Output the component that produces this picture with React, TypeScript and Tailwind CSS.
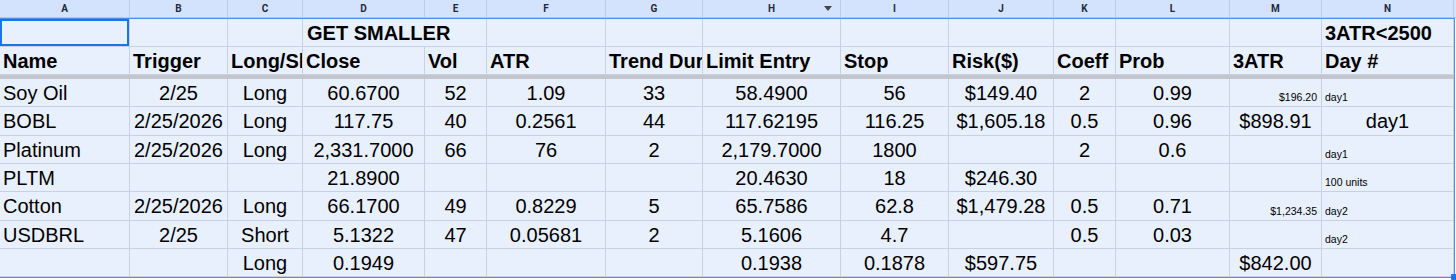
import React from "react"

type Cell =
  | string
  | { text: string; size: "small" | "big"; align: "left" | "right" | "center" }

const letters = ["A", "B", "C", "D", "E", "F", "G", "H", "I", "J", "K", "L", "M", "N"]

const headers = [
  "Name",
  "Trigger",
  "Long/Short",
  "Close",
  "Vol",
  "ATR",
  "Trend Duration",
  "Limit Entry",
  "Stop",
  "Risk($)",
  "Coeff",
  "Prob",
  "3ATR",
  "Day #",
]

const sm = (text: string, align: "left" | "right"): Cell => ({ text, size: "small", align })

const rows: { h: string; cells: Cell[] }[] = [
  {
    h: "h-[28px]",
    cells: ["Soy Oil", "2/25", "Long", "60.6700", "52", "1.09", "33", "58.4900", "56", "$149.40", "2", "0.99", sm("$196.20", "right"), sm("day1", "left")],
  },
  {
    h: "h-[29px]",
    cells: ["BOBL", "2/25/2026", "Long", "117.75", "40", "0.2561", "44", "117.62195", "116.25", "$1,605.18", "0.5", "0.96", "$898.91", "day1"],
  },
  {
    h: "h-[28px]",
    cells: ["Platinum", "2/25/2026", "Long", "2,331.7000", "66", "76", "2", "2,179.7000", "1800", "", "2", "0.6", "", sm("day1", "left")],
  },
  {
    h: "h-[28px]",
    cells: ["PLTM", "", "", "21.8900", "", "", "", "20.4630", "18", "$246.30", "", "", "", sm("100 units", "left")],
  },
  {
    h: "h-[29px]",
    cells: ["Cotton", "2/25/2026", "Long", "66.1700", "49", "0.8229", "5", "65.7586", "62.8", "$1,479.28", "0.5", "0.71", sm("$1,234.35", "right"), sm("day2", "left")],
  },
  {
    h: "h-[28px]",
    cells: ["USDBRL", "2/25", "Short", "5.1322", "47", "0.05681", "2", "5.1606", "4.7", "", "0.5", "0.03", "", sm("day2", "left")],
  },
  {
    h: "h-[28px]",
    cells: ["", "", "Long", "0.1949", "", "", "", "0.1938", "0.1878", "$597.75", "", "", "$842.00", ""],
  },
]

const gridCols =
  "grid grid-cols-[130px_98px_75px_122px_62px_119px_97px_138px_108px_105px_62px_114px_92px_132px]"

const cellBase =
  "border-r border-b border-[#c6d1e2] overflow-hidden whitespace-nowrap"

function DataCell({ cell, col, h }: { cell: Cell; col: number; h: string }) {
  if (typeof cell === "string") {
    const align = col === 0 ? "justify-start pl-[3px]" : "justify-center"
    return (
      <div className={`${cellBase} ${h} flex items-center ${align} text-[20px] leading-[20px]`}>
        {cell}
      </div>
    )
  }
  const align = cell.align === "right" ? "justify-end pr-[4px]" : "justify-start pl-[3px]"
  return (
    <div className={`${cellBase} ${h} flex items-end pb-[3px] ${align} text-[10.5px] leading-[12px]`}>
      {cell.text}
    </div>
  )
}

export default function App() {
  return (
    <div className="relative w-[1456px] h-[280px] bg-white font-['Liberation_Sans',Arial,sans-serif] text-black overflow-hidden">
      {/* column letters */}
      <div className={`${gridCols} h-[18px] bg-[#d3e3fd] border-b border-[#a8c7fa]`}>
        {letters.map((l, i) => (
          <div
            key={l}
            className="relative flex items-center justify-center border-r border-[#bfcbe0] text-[10px] font-bold text-[#1f2a3d] font-['Roboto',Arial,sans-serif]"
          >
            {l}
            {l === "H" && (
              <svg className="absolute right-[8px] top-[6px]" width="8" height="5" viewBox="0 0 8 5">
                <path d="M0 0 H8 L4 5 Z" fill="#444746" />
              </svg>
            )}
          </div>
        ))}
      </div>

      {/* selected range */}
      <div className="w-[1455px] bg-[#e8f0fe] border-t border-r border-b border-[#4f8ef0]">
        {/* row 1 */}
        <div className={`${gridCols} h-[28px]`}>
          <div className={`${cellBase} ring-2 ring-inset ring-[#1a73e8]`} />
          <div className={cellBase} />
          <div className={cellBase} />
          <div className={`${cellBase} col-span-2 flex items-center pl-[4px] text-[20px] leading-[20px] font-bold`}>
            GET SMALLER
          </div>
          {Array.from({ length: 8 }).map((_, i) => (
            <div key={i} className={cellBase} />
          ))}
          <div className={`${cellBase} flex items-center pl-[3px] text-[20px] leading-[20px] font-bold`}>
            3ATR&lt;2500
          </div>
        </div>

        {/* row 2: headers */}
        <div className={`${gridCols} h-[28px]`}>
          {headers.map((t) => (
            <div
              key={t}
              className={`${cellBase} flex items-center pl-[3px] text-[20px] leading-[20px] font-bold`}
            >
              {t}
            </div>
          ))}
        </div>

        {/* frozen divider */}
        <div className="h-[4px] bg-[#c3c7cd]" />

        {rows.map((r, ri) => (
          <div key={ri} className={gridCols}>
            {r.cells.map((c, ci) => (
              <DataCell key={ci} cell={c} col={ci} h={r.h} />
            ))}
          </div>
        ))}
      </div>

      {/* fill handle */}
      <div className="absolute left-[1451px] top-[274px] w-[6px] h-[6px] bg-[#1a73e8] rounded-[1px]" />
    </div>
  )
}
